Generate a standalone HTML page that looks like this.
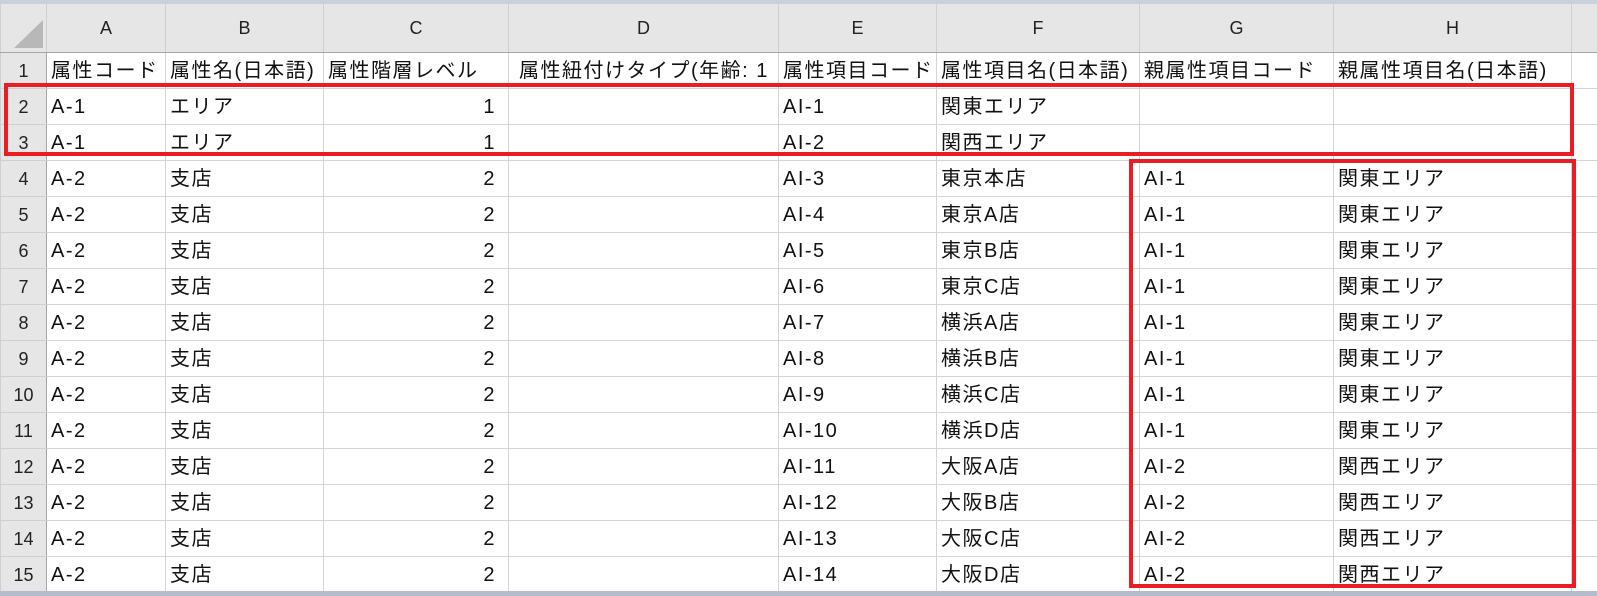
<!DOCTYPE html>
<html><head><meta charset="utf-8"><style>
html,body{margin:0;padding:0;width:1597px;height:596px;overflow:hidden;background:#fff;font-family:"Liberation Sans","Noto Sans CJK JP",sans-serif;}
#top{position:absolute;left:0;top:0;width:1597px;height:3px;background:#c8d1e0;}
#bot{position:absolute;left:0;top:591px;width:1597px;height:5px;background:#b4bccb;}
table{position:absolute;left:0;top:3px;border-collapse:collapse;table-layout:fixed;width:1597px;}
td{border:1px solid #d4d4d4;height:36px;max-height:36px;padding:0 4px;font-size:20px;letter-spacing:1.5px;color:#111;white-space:nowrap;overflow:hidden;box-sizing:border-box;line-height:33px;padding-top:2px;}
tr.h td{background:#e6e6e6;height:49px;text-align:center;font-size:18px;letter-spacing:0;color:#222;border-color:#cfcfcf;border-bottom:1px solid #a6a6a6;line-height:47px;padding:0;}
td.r{background:#e6e6e6;text-align:center;font-size:18px;letter-spacing:0;color:#222;padding:2px 0 0 0;border-color:#cfcfcf #a6a6a6 #cfcfcf #cfcfcf;}
td.n{text-align:right;padding-right:12px;}
.box{position:absolute;border:4px solid #ea1c24;box-sizing:border-box;}
#tri{position:absolute;left:14px;top:20px;width:0;height:0;border-left:29px solid transparent;border-bottom:28px solid #b8b8b8;}
</style></head><body>
<div id="top"></div>
<table>
<colgroup><col style="width:46px"><col style="width:119px"><col style="width:158px"><col style="width:185px"><col style="width:270px"><col style="width:158px"><col style="width:203px"><col style="width:194px"><col style="width:238px"><col style="width:26px"></colgroup>
<tr class="h"><td></td><td>A</td><td>B</td><td>C</td><td>D</td><td>E</td><td>F</td><td>G</td><td>H</td><td></td></tr>
<tr><td class="r">1</td><td>属性コード</td><td>属性名(日本語)</td><td>属性階層レベル</td><td style="padding-left:10px">属性紐付けタイプ(年齢: 1（</td><td>属性項目コード</td><td>属性項目名(日本語)</td><td>親属性項目コード</td><td>親属性項目名(日本語)</td><td></td></tr>
<tr><td class="r">2</td><td>A-1</td><td>エリア</td><td class="n">1</td><td></td><td>AI-1</td><td>関東エリア</td><td></td><td></td><td></td></tr>
<tr><td class="r">3</td><td>A-1</td><td>エリア</td><td class="n">1</td><td></td><td>AI-2</td><td>関西エリア</td><td></td><td></td><td></td></tr>
<tr><td class="r">4</td><td>A-2</td><td>支店</td><td class="n">2</td><td></td><td>AI-3</td><td>東京本店</td><td>AI-1</td><td>関東エリア</td><td></td></tr>
<tr><td class="r">5</td><td>A-2</td><td>支店</td><td class="n">2</td><td></td><td>AI-4</td><td>東京A店</td><td>AI-1</td><td>関東エリア</td><td></td></tr>
<tr><td class="r">6</td><td>A-2</td><td>支店</td><td class="n">2</td><td></td><td>AI-5</td><td>東京B店</td><td>AI-1</td><td>関東エリア</td><td></td></tr>
<tr><td class="r">7</td><td>A-2</td><td>支店</td><td class="n">2</td><td></td><td>AI-6</td><td>東京C店</td><td>AI-1</td><td>関東エリア</td><td></td></tr>
<tr><td class="r">8</td><td>A-2</td><td>支店</td><td class="n">2</td><td></td><td>AI-7</td><td>横浜A店</td><td>AI-1</td><td>関東エリア</td><td></td></tr>
<tr><td class="r">9</td><td>A-2</td><td>支店</td><td class="n">2</td><td></td><td>AI-8</td><td>横浜B店</td><td>AI-1</td><td>関東エリア</td><td></td></tr>
<tr><td class="r">10</td><td>A-2</td><td>支店</td><td class="n">2</td><td></td><td>AI-9</td><td>横浜C店</td><td>AI-1</td><td>関東エリア</td><td></td></tr>
<tr><td class="r">11</td><td>A-2</td><td>支店</td><td class="n">2</td><td></td><td>AI-10</td><td>横浜D店</td><td>AI-1</td><td>関東エリア</td><td></td></tr>
<tr><td class="r">12</td><td>A-2</td><td>支店</td><td class="n">2</td><td></td><td>AI-11</td><td>大阪A店</td><td>AI-2</td><td>関西エリア</td><td></td></tr>
<tr><td class="r">13</td><td>A-2</td><td>支店</td><td class="n">2</td><td></td><td>AI-12</td><td>大阪B店</td><td>AI-2</td><td>関西エリア</td><td></td></tr>
<tr><td class="r">14</td><td>A-2</td><td>支店</td><td class="n">2</td><td></td><td>AI-13</td><td>大阪C店</td><td>AI-2</td><td>関西エリア</td><td></td></tr>
<tr><td class="r">15</td><td>A-2</td><td>支店</td><td class="n">2</td><td></td><td>AI-14</td><td>大阪D店</td><td>AI-2</td><td>関西エリア</td><td></td></tr>
</table>
<div id="tri"></div>
<div class="box" style="left:4px;top:83px;width:1570px;height:73px"></div>
<div class="box" style="left:1129px;top:159px;width:447px;height:429px"></div>
<div id="bot"></div>
</body></html>
